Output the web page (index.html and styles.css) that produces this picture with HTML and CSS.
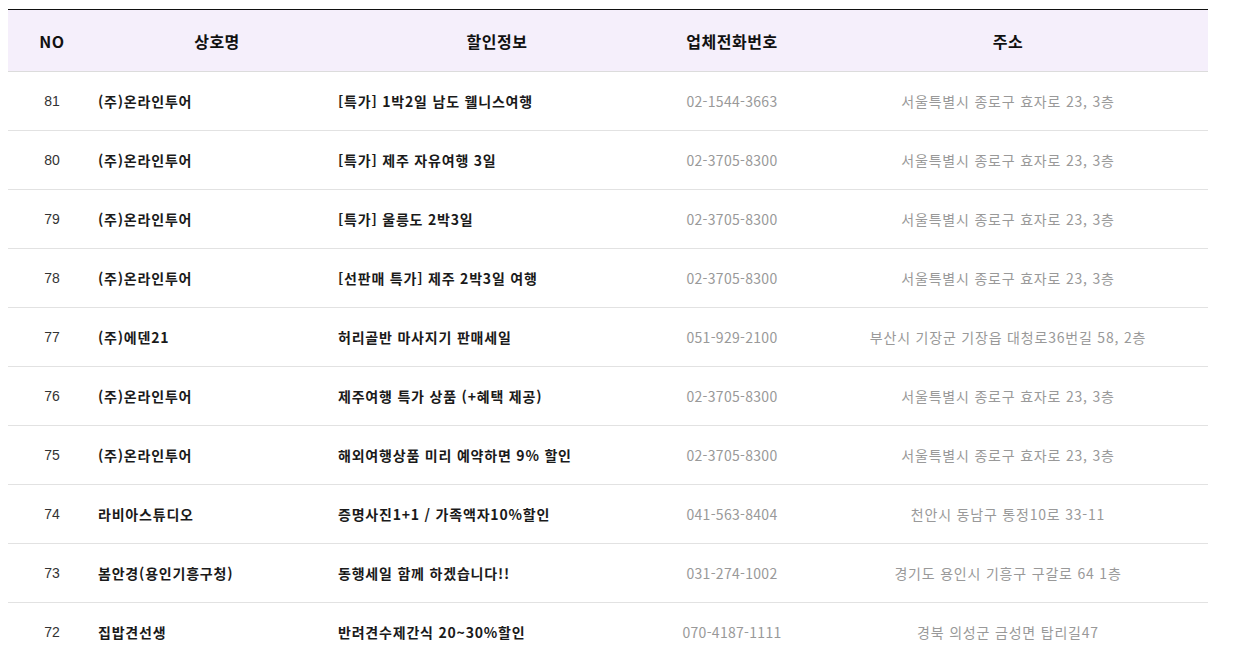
FILE: index.html
```html
<!DOCTYPE html>
<html lang="ko">
<head>
<meta charset="utf-8">
<title>할인정보</title>
<link rel="stylesheet" href="styles.css">
</head>
<body>
<table class="list">
  <colgroup>
    <col class="c-no">
    <col class="c-name">
    <col class="c-info">
    <col class="c-tel">
    <col class="c-addr">
  </colgroup>
  <thead>
    <tr>
      <th>NO</th>
      <th>상호명</th>
      <th>할인정보</th>
      <th>업체전화번호</th>
      <th>주소</th>
    </tr>
  </thead>
  <tbody>
    <tr><td class="no">81</td><td class="name">(주)온라인투어</td><td class="info">[특가] 1박2일 남도 웰니스여행</td><td class="tel">02-1544-3663</td><td class="addr">서울특별시 종로구 효자로 23, 3층</td></tr>
    <tr><td class="no">80</td><td class="name">(주)온라인투어</td><td class="info">[특가] 제주 자유여행 3일</td><td class="tel">02-3705-8300</td><td class="addr">서울특별시 종로구 효자로 23, 3층</td></tr>
    <tr><td class="no">79</td><td class="name">(주)온라인투어</td><td class="info">[특가] 울릉도 2박3일</td><td class="tel">02-3705-8300</td><td class="addr">서울특별시 종로구 효자로 23, 3층</td></tr>
    <tr><td class="no">78</td><td class="name">(주)온라인투어</td><td class="info">[선판매 특가] 제주 2박3일 여행</td><td class="tel">02-3705-8300</td><td class="addr">서울특별시 종로구 효자로 23, 3층</td></tr>
    <tr><td class="no">77</td><td class="name">(주)에덴21</td><td class="info">허리골반 마사지기 판매세일</td><td class="tel">051-929-2100</td><td class="addr">부산시 기장군 기장읍 대청로36번길 58, 2층</td></tr>
    <tr><td class="no">76</td><td class="name">(주)온라인투어</td><td class="info">제주여행 특가 상품 (+혜택 제공)</td><td class="tel">02-3705-8300</td><td class="addr">서울특별시 종로구 효자로 23, 3층</td></tr>
    <tr><td class="no">75</td><td class="name">(주)온라인투어</td><td class="info">해외여행상품 미리 예약하면 9% 할인</td><td class="tel">02-3705-8300</td><td class="addr">서울특별시 종로구 효자로 23, 3층</td></tr>
    <tr><td class="no">74</td><td class="name">라비아스튜디오</td><td class="info">증명사진1+1 / 가족액자10%할인</td><td class="tel">041-563-8404</td><td class="addr">천안시 동남구 통정10로 33-11</td></tr>
    <tr><td class="no">73</td><td class="name">봄안경(용인기흥구청)</td><td class="info">동행세일 함께 하겠습니다!!</td><td class="tel">031-274-1002</td><td class="addr">경기도 용인시 기흥구 구갈로 64 1층</td></tr>
    <tr><td class="no">72</td><td class="name">집밥견선생</td><td class="info">반려견수제간식 20~30%할인</td><td class="tel">070-4187-1111</td><td class="addr">경북 의성군 금성면 탑리길47</td></tr>
  </tbody>
</table>
</body>
</html>
```
FILE: styles.css
```css
html, body {
  background: #fff;
}
body {
  margin: 9px 8px 0;
  font-family: "Noto Sans CJK KR", "Noto Sans", sans-serif;
  color: #222;
}
.list {
  width: 1200px;
  border-collapse: collapse;
  table-layout: fixed;
  border-top: 1px solid #111;
}
.c-no { width: 88px; }
.c-name { width: 242px; }
.c-info { width: 318px; }
.c-tel { width: 152px; }
.c-addr { width: 400px; }

.list th {
  height: 61px;
  padding: 0;
  background: #f5effb;
  border-bottom: 1px solid #dcdcdc;
  font-size: 16px;
  font-weight: 700;
  color: #111;
  text-align: center;
  line-height: 20px;
  letter-spacing: 0.5px;
}
.list td {
  height: 58px;
  padding: 0;
  border-bottom: 1px solid #e2e2e2;
  font-size: 14px;
  line-height: 18px;
  letter-spacing: 0.8px;
  vertical-align: middle;
}
.list td.no {
  text-align: center;
  color: #333;
  font-family: "Liberation Sans", "Noto Sans CJK KR", sans-serif;
  font-size: 14px;
  letter-spacing: 0;
}
.list td.name {
  padding-left: 2px;
  font-weight: 700;
  color: #1a1a1a;
}
.list td.info {
  font-weight: 700;
  color: #1a1a1a;
}
.list td.tel,
.list td.addr {
  text-align: center;
  color: #999;
}
.list td.tel {
  letter-spacing: 0.3px;
}
```
